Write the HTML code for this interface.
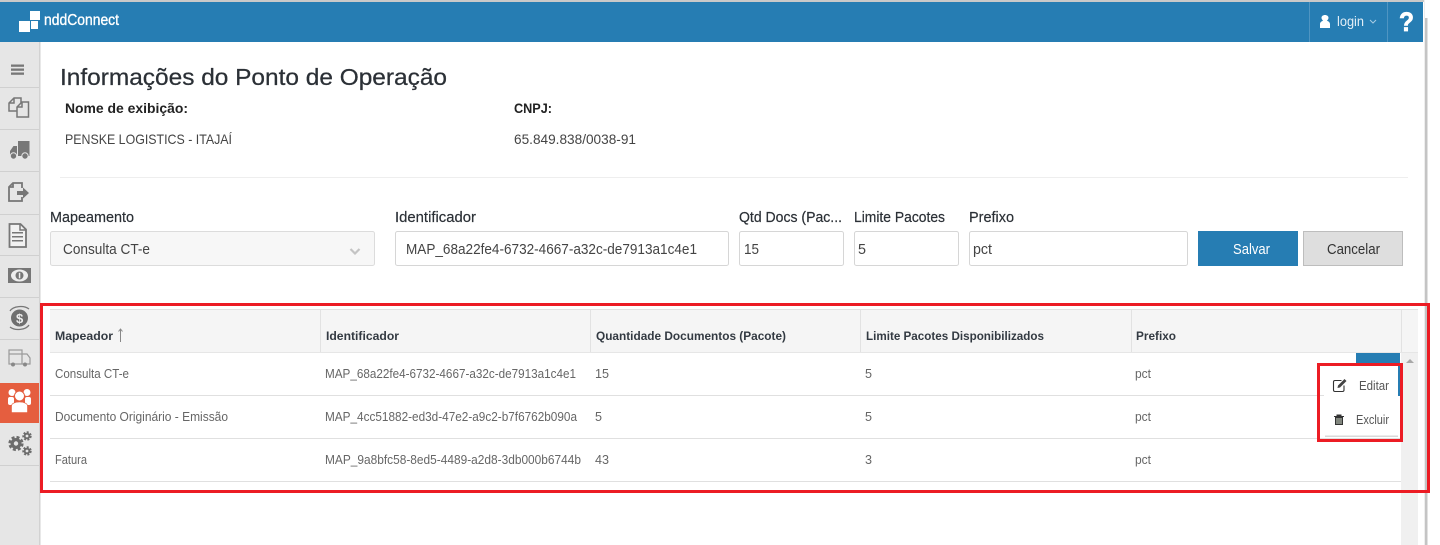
<!DOCTYPE html>
<html><head><meta charset="utf-8"><style>
html,body{margin:0;padding:0;background:#fff;width:1440px;height:545px;overflow:hidden}
svg{display:block}
text{font-family:"Liberation Sans",sans-serif;white-space:pre}
.b{font-weight:bold}
.lab{font-size:14.5px;fill:#2b3036;stroke:#2b3036;stroke-width:.2px}
.in{font-size:14.5px;fill:#444}
.th{font-size:12px;font-weight:bold;fill:#333a42}
.td{font-size:12.5px;fill:#666}
</style></head><body>
<svg width="1440" height="545" viewBox="0 0 1440 545" xmlns="http://www.w3.org/2000/svg">
<rect width="1440" height="545" fill="#fff"/>
<!-- top -->
<rect width="1424" height="2" fill="#c9c9c9"/>
<rect y="2" width="1423" height="40" fill="#267db3"/>
<rect x="1309" y="2" width="1" height="40" fill="#4f95c2"/>
<rect x="1387" y="2" width="1" height="40" fill="#4f95c2"/>
<rect x="1424" y="0" width="1" height="545" fill="#eee"/>
<rect x="1425" y="18" width="2.5" height="527" fill="#c4c4c4"/>
<!-- logo -->
<g fill="#fff"><rect x="19" y="21" width="11" height="11"/><rect x="30" y="11" width="10" height="9"/><rect x="31" y="21" width="7" height="8"/></g>
<text x="44" y="25" font-size="15.500" fill="#fff" stroke="#fff" stroke-width=".35" textLength="75" lengthAdjust="spacingAndGlyphs">nddConnect</text>
<!-- user -->
<path d="M1320 28v-4c0-2 2-3 3.200-3.300c-1-.7-1.700-1.700-1.700-2.900c0-1.600 1.500-2.800 3.500-2.800s3.500 1.200 3.500 2.800c0 1.200-.7 2.200-1.700 2.900c1.200.3 3.200 1.300 3.200 3.300v4z" fill="#fff"/>
<text x="1337" y="26" font-size="13.500" fill="#e3eef6" textLength="27" lengthAdjust="spacingAndGlyphs">login</text>
<path d="M1370 20l3 3l3-3" fill="none" stroke="#a8cce3" stroke-width="1"/>
<text x="1399" y="31" class="b" font-size="27" fill="#fff" stroke="#fff" stroke-width=".7" textLength="15" lengthAdjust="spacingAndGlyphs">?</text>
<!-- sidebar -->
<rect y="42" width="39" height="503" fill="#e6e6e6"/>
<rect x="39" y="42" width="1.500" height="503" fill="#d2d2d2"/>
<g fill="#d0d0d0">
<rect y="87" width="39" height="1"/><rect y="129" width="39" height="1"/><rect y="171" width="39" height="1"/><rect y="214" width="39" height="1"/><rect y="255" width="39" height="1"/><rect y="297" width="39" height="1"/><rect y="339" width="39" height="1"/><rect y="465" width="39" height="1"/>
</g>
<rect y="383" width="39" height="40" fill="#e55e3f"/>
<!-- hamburger -->
<g fill="#777"><rect x="11" y="64.500" width="13" height="2.300"/><rect x="11" y="68.500" width="13" height="2.300"/><rect x="11" y="72.500" width="13" height="2.300"/></g>
<!-- copy icon -->
<g fill="none" stroke="#777" stroke-width="1.500"><path d="M9 108v-5l5-5h7v5"/><path d="M9 108v3h8"/><path d="M14 98v5h-5"/><path d="M17 117v-10l5-5h6.500v15z"/><path d="M22 102v5h-5"/></g>
<!-- truck -->
<path d="M18 141h11.500v15h-11.500zM17 146v10h-7v-5l3.500-5z" fill="#777"/><circle cx="13.500" cy="156" r="3.200" fill="#777" stroke="#e6e6e6"/><circle cx="25" cy="156" r="3.200" fill="#777" stroke="#e6e6e6"/>
<!-- export -->
<g fill="none" stroke="#777" stroke-width="1.800"><path d="M22 188v-5h-9l-4 4v14h13v-4"/><path d="M13 183v4h-4"/></g><path d="M17 191h6v-3.500l6 5.500l-6 5.500v-3.500h-6z" fill="#777"/>
<!-- doc -->
<path d="M9.500 224h11l5.500 5.500v17.500h-16.500z" fill="#f2f2f2" stroke="#777" stroke-width="1.800"/><path d="M20 224v6h6" fill="none" stroke="#777" stroke-width="1.500"/><g fill="#777"><rect x="12" y="232" width="11" height="1.500"/><rect x="12" y="236" width="11" height="1.500"/><rect x="12" y="240" width="11" height="1.500"/></g>
<!-- money -->
<rect x="8" y="268" width="23" height="15" fill="#777"/><ellipse cx="19.500" cy="275.500" rx="8.500" ry="6" fill="#eee"/><circle cx="19.500" cy="275.500" r="4" fill="#777"/><rect x="18.800" y="272.800" width="1.500" height="5.500" fill="#eee"/>
<!-- dollar cycle -->
<circle cx="19.500" cy="318" r="8.500" fill="#6f6f6f"/><text x="16" y="323" class="b" font-size="13" fill="#eee">$</text>
<g fill="none" stroke="#777" stroke-width="1.300"><path d="M10 311c3-5 14-6 19-2"/><path d="M29 325c-3 5-14 6-19 2"/></g>
<!-- truck outline -->
<g fill="none" stroke="#9a9a9a" stroke-width="1.200"><rect x="9" y="350" width="13" height="14"/><path d="M22 354h5l3 4v6h-8"/><path d="M9 354h13"/></g><circle cx="13" cy="364.500" r="2" fill="#888"/><circle cx="25" cy="364.500" r="2" fill="#888"/>
<!-- people active -->
<g fill="#fff"><circle cx="12" cy="392.500" r="3.500"/><circle cx="27" cy="392.500" r="3.500"/><rect x="8" y="397" width="6" height="8" rx="2"/><rect x="25" y="397" width="6" height="8" rx="2"/></g>
<circle cx="19.500" cy="396" r="5" fill="#fff" stroke="#e55e3f"/>
<path d="M11.500 412.500v-6.500c0-2.500 3.500-4 8-4s8 1.500 8 4v6.500z" fill="#fff" stroke="#e55e3f" stroke-width=".6"/>
<!-- gears -->
<g fill="#6c6c6c"><circle cx="16" cy="443.500" r="5.500"/><circle cx="27" cy="436" r="3.300"/><circle cx="27" cy="451" r="3.300"/></g>
<g fill="none" stroke="#6c6c6c"><circle cx="16" cy="443.500" r="6.300" stroke-width="2.600" stroke-dasharray="3 2"/><circle cx="27" cy="436" r="3.800" stroke-width="1.800" stroke-dasharray="2 1.500"/><circle cx="27" cy="451" r="3.800" stroke-width="1.800" stroke-dasharray="2 1.500"/></g>
<g fill="#e6e6e6"><circle cx="16" cy="443.500" r="2.200"/><circle cx="27" cy="436" r="1.400"/><circle cx="27" cy="451" r="1.400"/></g>
<!-- heading -->
<text x="60" y="85" font-size="23.500" fill="#2b3036" stroke="#2b3036" stroke-width=".25" textLength="387" lengthAdjust="spacingAndGlyphs">Informações do Ponto de Operação</text>
<text x="65" y="113" class="b" font-size="13.500" fill="#222" textLength="123" lengthAdjust="spacingAndGlyphs">Nome de exibição:</text>
<text x="514" y="113" class="b" font-size="13.500" fill="#222" textLength="38" lengthAdjust="spacingAndGlyphs">CNPJ:</text>
<text x="65" y="144" font-size="14" fill="#444" textLength="167" lengthAdjust="spacingAndGlyphs">PENSKE LOGISTICS - ITAJAÍ</text>
<text x="514" y="144" font-size="13.500" fill="#444" textLength="122" lengthAdjust="spacingAndGlyphs">65.849.838/0038-91</text>
<rect x="60" y="177" width="1348" height="1" fill="#eee"/>
<!-- form -->
<text x="50" y="222" class="lab" textLength="84" lengthAdjust="spacingAndGlyphs">Mapeamento</text>
<text x="395" y="222" class="lab" textLength="81" lengthAdjust="spacingAndGlyphs">Identificador</text>
<text x="739" y="222" class="lab" textLength="103" lengthAdjust="spacingAndGlyphs">Qtd Docs (Pac...</text>
<text x="854" y="222" class="lab" textLength="91" lengthAdjust="spacingAndGlyphs">Limite Pacotes</text>
<text x="969" y="222" class="lab" textLength="45" lengthAdjust="spacingAndGlyphs">Prefixo</text>
<rect x="50.500" y="231.500" width="324" height="34" rx="2" fill="#f7f7f7" stroke="#dcdcdc"/>
<text x="63" y="254" class="in" textLength="87" lengthAdjust="spacingAndGlyphs">Consulta CT-e</text>
<path d="M350.500 249l4.500 4.500l4.500-4.500" fill="none" stroke="#c4c4c4" stroke-width="2.200"/>
<g fill="#fff" stroke="#d6d6d6"><rect x="395.500" y="231.500" width="333" height="34" rx="2"/><rect x="739.500" y="231.500" width="104" height="34" rx="2"/><rect x="854.500" y="231.500" width="104" height="34" rx="2"/><rect x="969.500" y="231.500" width="218" height="34" rx="2"/></g>
<text x="406" y="254" class="in" textLength="291" lengthAdjust="spacingAndGlyphs">MAP_68a22fe4-6732-4667-a32c-de7913a1c4e1</text>
<text x="744" y="254" class="in" textLength="15" lengthAdjust="spacingAndGlyphs">15</text>
<text x="858" y="254" class="in" textLength="8" lengthAdjust="spacingAndGlyphs">5</text>
<text x="973" y="254" class="in" textLength="19" lengthAdjust="spacingAndGlyphs">pct</text>
<rect x="1198" y="231" width="100" height="35" fill="#267db3"/>
<text x="1233" y="254" font-size="14.500" fill="#fff" textLength="37" lengthAdjust="spacingAndGlyphs">Salvar</text>
<rect x="1303.500" y="231.500" width="99" height="34" fill="#dedede" stroke="#bdbdbd"/>
<text x="1327" y="254" font-size="14.500" fill="#333" textLength="53" lengthAdjust="spacingAndGlyphs">Cancelar</text>
<!-- table -->
<rect x="50" y="309" width="1368" height="43" fill="#f5f5f5"/>
<rect x="50" y="309" width="1368" height="1" fill="#e2e2e2"/>
<rect x="50" y="352" width="1368" height="1" fill="#e6e6e6"/>
<g fill="#e2e2e2"><rect x="320" y="310" width="1" height="42"/><rect x="590" y="310" width="1" height="42"/><rect x="860" y="310" width="1" height="42"/><rect x="1131" y="310" width="1" height="42"/><rect x="1401" y="310" width="1" height="42"/></g>
<text x="55" y="340" class="th" textLength="58" lengthAdjust="spacingAndGlyphs">Mapeador</text>
<path d="M120.500 342v-13M118.500 331.500l2-2.500l2 2.500" fill="none" stroke="#888" stroke-width="1"/>
<text x="326" y="340" class="th" textLength="73" lengthAdjust="spacingAndGlyphs">Identificador</text>
<text x="596" y="340" class="th" textLength="190" lengthAdjust="spacingAndGlyphs">Quantidade Documentos (Pacote)</text>
<text x="866" y="340" class="th" textLength="178" lengthAdjust="spacingAndGlyphs">Limite Pacotes Disponibilizados</text>
<text x="1136" y="340" class="th" textLength="40" lengthAdjust="spacingAndGlyphs">Prefixo</text>
<g fill="#e0e0e0"><rect x="50" y="395" width="1351" height="1"/><rect x="50" y="438" width="1351" height="1"/><rect x="50" y="481" width="1351" height="1"/></g>
<text x="55" y="378" class="td" textLength="74" lengthAdjust="spacingAndGlyphs">Consulta CT-e</text>
<text x="325" y="378" class="td" textLength="251" lengthAdjust="spacingAndGlyphs">MAP_68a22fe4-6732-4667-a32c-de7913a1c4e1</text>
<text x="595" y="378" class="td" textLength="14" lengthAdjust="spacingAndGlyphs">15</text>
<text x="865" y="378" class="td" textLength="7" lengthAdjust="spacingAndGlyphs">5</text>
<text x="1135" y="378" class="td" textLength="16" lengthAdjust="spacingAndGlyphs">pct</text>
<text x="55" y="421" class="td" textLength="173" lengthAdjust="spacingAndGlyphs">Documento Originário - Emissão</text>
<text x="325" y="421" class="td" textLength="252" lengthAdjust="spacingAndGlyphs">MAP_4cc51882-ed3d-47e2-a9c2-b7f6762b090a</text>
<text x="595" y="421" class="td" textLength="7" lengthAdjust="spacingAndGlyphs">5</text>
<text x="865" y="421" class="td" textLength="7" lengthAdjust="spacingAndGlyphs">5</text>
<text x="1135" y="421" class="td" textLength="16" lengthAdjust="spacingAndGlyphs">pct</text>
<text x="55" y="464" class="td" textLength="32" lengthAdjust="spacingAndGlyphs">Fatura</text>
<text x="325" y="464" class="td" textLength="256" lengthAdjust="spacingAndGlyphs">MAP_9a8bfc58-8ed5-4489-a2d8-3db000b6744b</text>
<text x="595" y="464" class="td" textLength="14" lengthAdjust="spacingAndGlyphs">43</text>
<text x="865" y="464" class="td" textLength="7" lengthAdjust="spacingAndGlyphs">3</text>
<text x="1135" y="464" class="td" textLength="16" lengthAdjust="spacingAndGlyphs">pct</text>
<!-- scroll track -->
<rect x="1401" y="353" width="17" height="192" fill="#f0f0f0"/>
<path d="M1406 363l4-4l4 4z" fill="#a8a8a8"/>
<!-- blue button behind popup -->
<rect x="1356" y="353" width="44" height="43" fill="#267db3"/>
<!-- popup -->
<rect x="1325" y="368" width="73" height="69" fill="#d9d9d9"/>
<rect x="1324" y="366" width="74" height="69.500" fill="#fff"/>
<g fill="none" stroke="#333" stroke-width="1.100"><path d="M1344 385.500v4.500c0 1-.5 1.500-1.500 1.500h-7.500c-1 0-1.500-.5-1.500-1.500v-8c0-1 .5-1.500 1.500-1.500h6.500"/></g>
<path d="M1338 385.500l6.500-6.500l2 2l-6.500 6.500l-2.500.5z" fill="#444"/>
<text x="1359" y="390" font-size="12.500" fill="#555" textLength="30" lengthAdjust="spacingAndGlyphs">Editar</text>
<path d="M1334 416h10v1h-1v8h-8v-8h-1zM1336.500 416v-1.500h5v1.500z" fill="#333"/>
<g fill="#cfd8c8"><rect x="1336.500" y="418" width="1" height="6"/><rect x="1338.500" y="418" width="1" height="6"/><rect x="1340.500" y="418" width="1" height="6"/></g>
<text x="1356" y="424" font-size="12.500" fill="#555" textLength="33" lengthAdjust="spacingAndGlyphs">Excluir</text>
<!-- red annotations -->
<rect x="41.500" y="304.500" width="1387" height="187" fill="none" stroke="#ec1c24" stroke-width="3"/>
<rect x="1318.500" y="364.500" width="83" height="76" fill="none" stroke="#ec1c24" stroke-width="3"/>
</svg>
</body></html>
